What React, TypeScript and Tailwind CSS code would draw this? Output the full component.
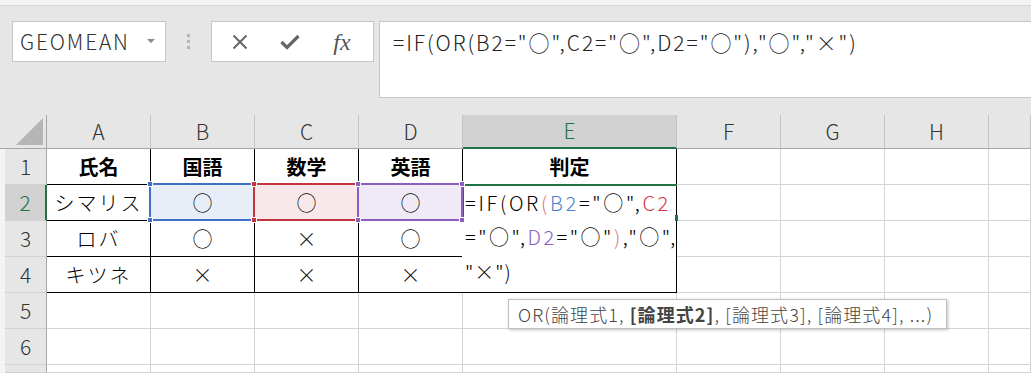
import React from "react";

const FONT = "font-['Noto_Sans_CJK_JP','Noto_Sans',sans-serif]";

const colLetters = ["A", "B", "C", "D", "E", "F", "G", "H", ""];
const colW = ["w-[104px]", "w-[104px]", "w-[104px]", "w-[104px]", "w-[214px]", "w-[104px]", "w-[104px]", "w-[104px]", "w-[42px]"];

const data: string[][] = [
  ["氏名", "国語", "数学", "英語", "判定"],
  ["シマリス", "○", "○", "○", ""],
  ["ロバ", "○", "×", "○", ""],
  ["キツネ", "×", "×", "×", ""],
];

function RefBox({ color, fill }: { color: string; fill: string }) {
  const border =
    color === "blue" ? "border-[#3f6fc6]" : color === "red" ? "border-[#c5343d]" : "border-[#8b5fbf]";
  const bg = color === "blue" ? "bg-[#3f6fc6]" : color === "red" ? "bg-[#c5343d]" : "bg-[#8b5fbf]";
  return (
    <div className={`absolute left-[-2px] top-[-2px] right-[-1px] bottom-[-1px] border-2 ${border} ${fill} z-20 pointer-events-none`}>
      <div className={`absolute left-[-4px] top-[-4px] w-[6px] h-[6px] ${bg} border border-white`} />
      <div className={`absolute right-[-4px] top-[-4px] w-[6px] h-[6px] ${bg} border border-white`} />
      <div className={`absolute left-[-4px] bottom-[-4px] w-[6px] h-[6px] ${bg} border border-white`} />
      <div className={`absolute right-[-4px] bottom-[-4px] w-[6px] h-[6px] ${bg} border border-white`} />
    </div>
  );
}

function EditOverlay() {
  return (
    <div className="absolute left-[-1px] top-[-1px] w-[215px] h-[109px] bg-white border-r border-b border-black z-10 text-[20px] text-black font-light">
      <div className="absolute left-0 top-0 right-[-1px] h-[2px] bg-[#217346]" />
      <div className="absolute left-0 top-0 w-[2px] h-[37px] bg-[#217346]" />
      <div className="absolute right-[-2px] top-[31px] w-[3px] h-[6px] bg-[#217346]" />
      <div className="pl-[3px] pt-[1px] leading-[35px] whitespace-nowrap">
        <div className="tracking-[2.7px]">
          =IF(OR<span className="text-[#e0707e]">(</span>
          <span className="text-[#4a7fd0]">B2</span>="○",<span className="text-[#d1343f]">C2</span>
        </div>
        <div className="tracking-[2.5px] mt-[-1px]">
          ="○",<span className="text-[#8b5fbf]">D2</span>="○"<span className="text-[#e0707e]">)</span>,"○",
        </div>
        <div className="tracking-[1px]">"×")</div>
      </div>
    </div>
  );
}

export default function App() {
  return (
    <div className={`w-[1031px] h-[373px] overflow-hidden bg-[#e6e6e6] relative ${FONT}`}>
      {/* ribbon remnant */}
      <div className="h-[6px] bg-[#f3f3f3] border-b border-[#d5d5d5]" />

      {/* formula bar row */}
      <div className="flex items-start pl-[12px] pt-[15px] h-[109px]">
        <div className="w-[154px] h-[41px] bg-white border border-[#c6c6c6] flex items-center justify-between pl-[7px] pr-[10px]">
          <span className="text-[21px] text-[#333] leading-none tracking-[1.8px] font-light">GEOMEAN</span>
          <svg width="8" height="5" viewBox="0 0 8 5">
            <path d="M0 0 L8 0 L4 4 Z" fill="#8a8a8a" />
          </svg>
        </div>
        <div className="w-[45px] h-[41px] flex flex-col items-center justify-center gap-[3px]">
          <div className="w-[3px] h-[3px] bg-[#b4b4b4]" />
          <div className="w-[3px] h-[3px] bg-[#b4b4b4]" />
          <div className="w-[3px] h-[3px] bg-[#b4b4b4]" />
        </div>
        <div className="w-[163px] h-[41px] bg-white border border-[#c6c6c6] flex items-center">
          <div className="w-[52px] flex justify-center pl-[3px]">
            <svg width="16" height="16" viewBox="0 0 16 16">
              <path d="M1.5 1.5 L14.5 14.5 M14.5 1.5 L1.5 14.5" stroke="#666" strokeWidth="2" />
            </svg>
          </div>
          <div className="w-[52px] flex justify-center">
            <svg width="20" height="16" viewBox="0 0 20 16">
              <path d="M1.5 8 L7 13.5 L18.5 2" stroke="#666" strokeWidth="3.2" fill="none" />
            </svg>
          </div>
          <div className="w-[52px] flex justify-center">
            <span className="font-['Liberation_Serif',serif] italic text-[24px] text-[#555] leading-none">fx</span>
          </div>
        </div>
        <div className="ml-[5px] flex-1 mr-[-4px] h-[77px] bg-white border border-[#c6c6c6] pl-[13px] pt-[7px]">
          <span className="text-[21px] text-[#222] leading-[26px] whitespace-nowrap tracking-[1.95px] font-light">
            =IF(OR(B2="○",C2="○",D2="○"),"○","×")
          </span>
        </div>
      </div>

      {/* grid */}
      <div className="flex flex-col">
        {/* column header row */}
        <div className="flex h-[34px]">
          <div className="w-[47px] h-[34px] bg-[#e6e6e6] border-r border-b border-[#a6a6a6] flex items-end justify-end pr-[3px] pb-[3px]">
            <svg width="27" height="27" viewBox="0 0 27 27">
              <path d="M27 0 L27 27 L0 27 Z" fill="#b5b5b5" />
            </svg>
          </div>
          {colLetters.map((c, i) => {
            const sel = c === "E";
            return (
              <div
                key={i}
                className={`${colW[i]} h-[34px] flex items-center justify-center text-[21px] font-light border-r border-[#c4c4c4] ${
                  sel ? "bg-[#d2d2d2] text-[#217346] border-b-2 border-b-[#217346]" : "bg-[#e6e6e6] text-[#333] border-b border-b-[#a6a6a6]"
                }`}
              >
                {c}
              </div>
            );
          })}
        </div>

        {/* body rows */}
        {[1, 2, 3, 4, 5, 6, 7].map((r) => {
          const selRow = r === 2;
          const h = r === 7 ? "h-[8px]" : "h-[36px]";
          return (
            <div key={r} className={`flex ${h}`}>
              <div className={`w-[47px] ${h} flex`}>
                <div className="w-[5px] h-full bg-[#f4f4f4]" />
                <div
                  className={`w-[42px] h-full flex items-center justify-center text-[21px] font-light border-b border-b-[#d0d0d0] ${
                    selRow ? "bg-[#d2d2d2] text-[#217346] border-r-2 border-r-[#217346]" : "bg-[#e6e6e6] text-[#333] border-r border-r-[#a6a6a6]"
                  }`}
                >
                  {r === 7 ? "" : r}
                </div>
              </div>
              {colLetters.map((c, ci) => {
                const inTable = r <= 4 && ci <= 4;
                const val = inTable ? data[r - 1][ci] : "";
                const bold = r === 1 && inTable;
                const isRef = r === 2 && ci >= 1 && ci <= 3;
                const isEdit = r === 2 && ci === 4;
                return (
                  <div
                    key={ci}
                    className={`${colW[ci]} ${h} bg-white relative flex items-center justify-center text-[20px] text-black ${
                      bold ? "font-bold" : "font-light"
                    } ${inTable ? "border-r border-b border-black" : "border-r border-b border-[#d4d4d4]"}`}
                  >
                    {isRef && ci === 1 && <RefBox color="blue" fill="bg-[#e8eef8]" />}
                    {isRef && ci === 2 && <RefBox color="red" fill="bg-[#f8e8e9]" />}
                    {isRef && ci === 3 && <RefBox color="purple" fill="bg-[#efeaf6]" />}
                    {isEdit && <EditOverlay />}
                    <span className={`relative z-30 ${ci === 0 && r > 1 ? "tracking-[2px]" : ""}`}>{val}</span>
                  </div>
                );
              })}
            </div>
          );
        })}
      </div>

      {/* tooltip */}
      <div className="absolute left-[508px] top-[299px] w-[439px] h-[30px] bg-white border border-[#c0c0c0] shadow-[1px_1px_3px_rgba(0,0,0,0.25)] z-40 flex items-center pl-[9px] text-[18px] text-[#444] whitespace-nowrap tracking-[1.1px] font-light">
        OR(論理式1, <span className="font-bold ml-[5px]">[論理式2]</span>, [論理式3], [論理式4], ...)
      </div>
    </div>
  );
}
